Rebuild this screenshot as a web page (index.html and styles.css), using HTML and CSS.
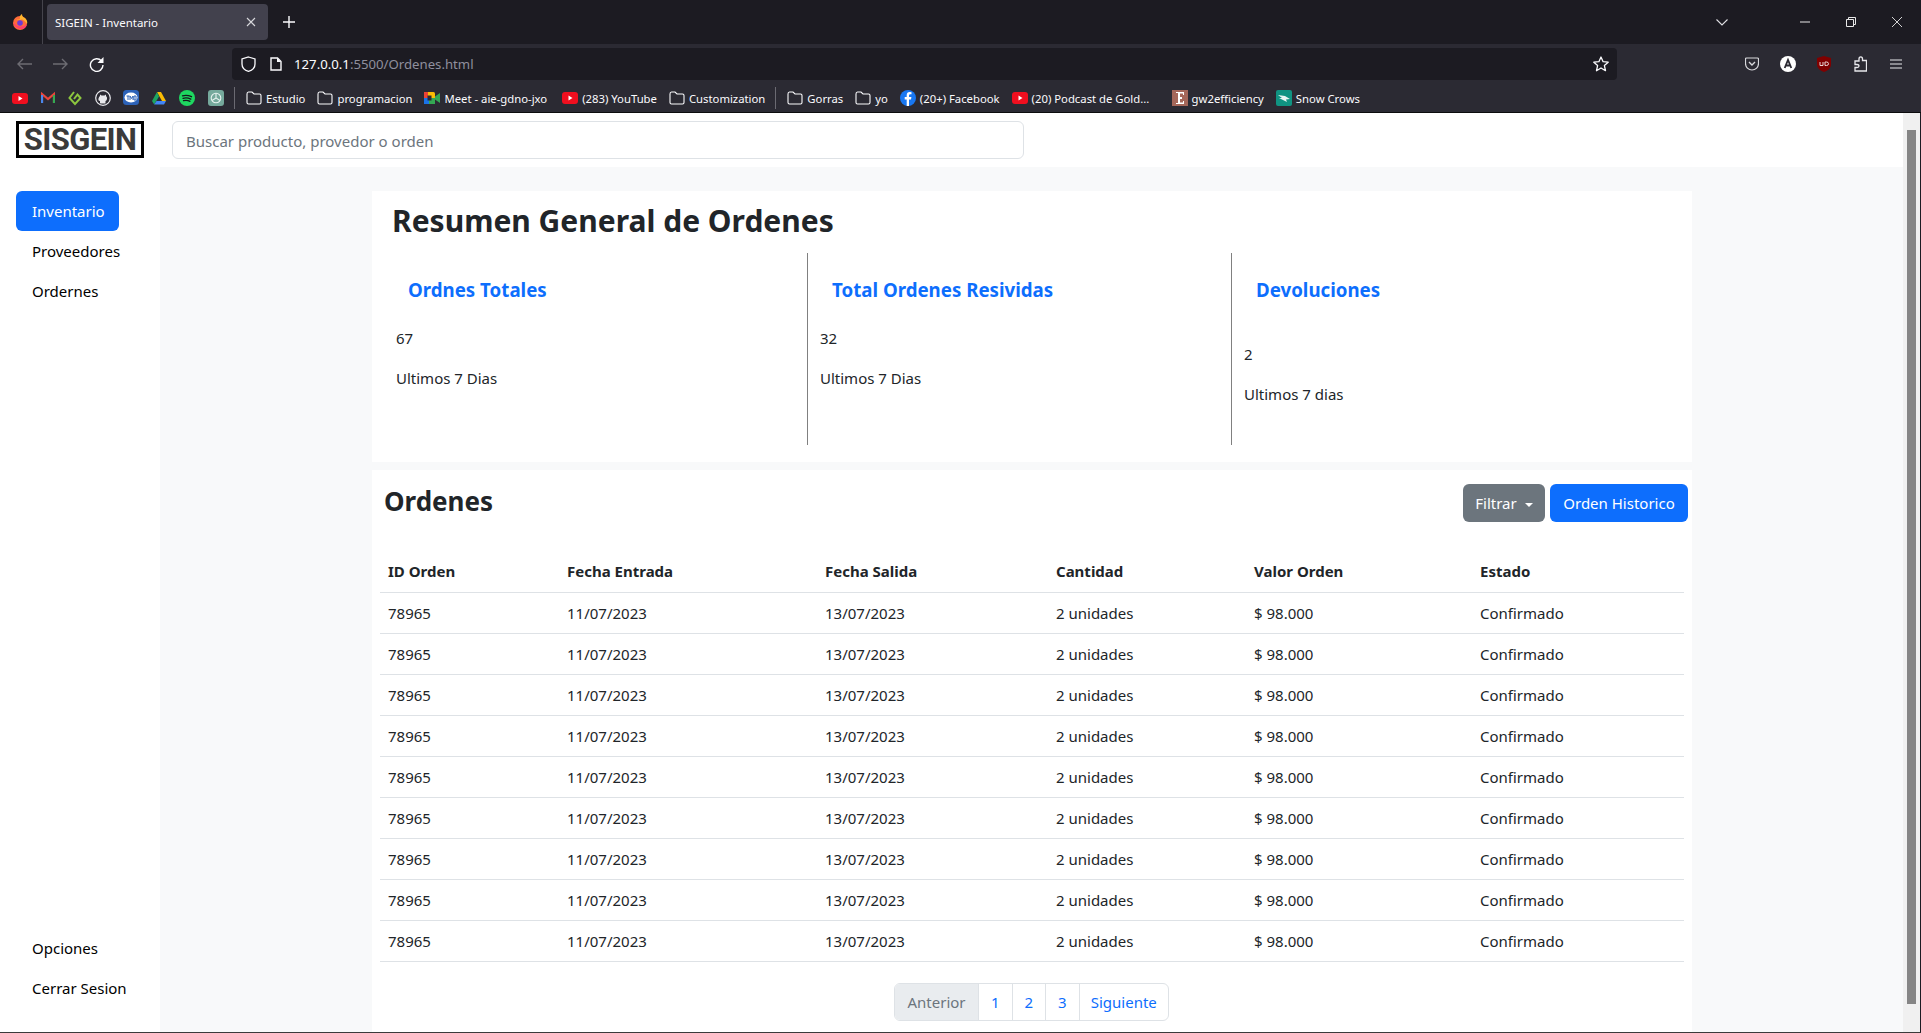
FILE: index.html
```html
<!DOCTYPE html>
<html>
<head>
	<title>SIGEIN - Inventario</title>
	<meta charset="utf-8">
	<link rel="stylesheet" href="styles.css">
</head>
<body>
	<div class="tabstrip">
		<div class="ff-box">
			<svg width="16" height="16" viewBox="0 0 16 16"><circle cx="8" cy="9" r="7" fill="#ff6a3a"/><path d="M3 4 Q6 6 8 5 Q7 2 10 0 Q10 3 13 4 Q16 7 15 10 Q11 4 8 6 Q5 6 3 4Z" fill="#ffb52e"/><circle cx="8" cy="9" r="2.800" fill="#6b3bd6"/><path d="M1 8 Q3 15 9 15 Q14 15 15 10 Q12 13 8 12.500 Q4 12 1 8Z" fill="#ff3d6e"/></svg>
		</div>
		<div class="tab">
			<span class="tab-title">SIGEIN - Inventario</span>
			<svg width="10" height="10" viewBox="0 0 10 10"><path d="M1 1 9 9M9 1 1 9" stroke="#d8d8dc" stroke-width="1.1"/></svg>
		</div>
		<svg class="newtab" width="12" height="12" viewBox="0 0 12 12"><path d="M6 0V12M0 6H12" stroke="#fbfbfe" stroke-width="1.4"/></svg>
		<div class="win-btns">
			<svg class="win-list" width="12" height="7" viewBox="0 0 12 7"><path d="M.5.5 6 6 11.500.5" fill="none" stroke="#e0e0e4" stroke-width="1.1"/></svg>
			<svg class="win-min" width="10" height="2" viewBox="0 0 10 2"><path d="M0 1H10" stroke="#e8e8e8"/></svg>
			<svg class="win-max" width="10" height="10" viewBox="0 0 10 10"><path d="M.5 2.500H7.500V9.500H.5ZM2.500 2.500V.5H9.500V7.500H7.500" fill="none" stroke="#e8e8e8"/></svg>
			<svg class="win-close" width="10" height="10" viewBox="0 0 10 10"><path d="M0 0 10 10M10 0 0 10" stroke="#e8e8e8" stroke-width=".9"/></svg>
		</div>
	</div>

	<div class="toolbar">
		<svg class="tb-back" width="15" height="12" viewBox="0 0 15 12"><path d="M15 6H1M6 1 1 6 6 11" fill="none" stroke="#6d6c73" stroke-width="1.4"/></svg>
		<svg class="tb-forward" width="15" height="12" viewBox="0 0 15 12"><path d="M0 6H14M9 1 14 6 9 11" fill="none" stroke="#6d6c73" stroke-width="1.4"/></svg>
		<svg class="tb-reload" width="15" height="15" viewBox="0 0 15 15"><path d="M12.500 4A6.300 6.300 0 1 0 14 8" fill="none" stroke="#fbfbfe" stroke-width="1.4"/><path d="M14.500 0V6H8.500Z" fill="#fbfbfe"/></svg>
		<div class="urlbar">
			<svg width="15" height="16" viewBox="0 0 15 16"><path d="M7.500 1 14 3V8C14 12 10.500 14.500 7.500 15.300 4.500 14.500 1 12 1 8V3Z" fill="none" stroke="#fbfbfe" stroke-width="1.3"/></svg>
			<svg class="url-page" width="12" height="14" viewBox="0 0 12 14"><path d="M1 1H7.500L11 4.500V13H1Z" fill="none" stroke="#fbfbfe" stroke-width="1.4"/><path d="M7 1V5H11Z" fill="#fbfbfe"/></svg>
			<span class="url-text">127.0.0.1<span class="url-dim">:5500/Ordenes.html</span></span>
			<svg class="url-star" width="16" height="16" viewBox="0 0 16 16"><path d="M8 1 10.100 5.700 15.200 6.200 11.400 9.600 12.500 14.700 8 12 3.500 14.700 4.600 9.600.8 6.200 5.900 5.700Z" fill="none" stroke="#fbfbfe" stroke-width="1.3" stroke-linejoin="round"/></svg>
		</div>
		<div class="tb-right">
			<svg width="14" height="14" viewBox="0 0 14 14"><path d="M1.500 1H12.500Q13.500 1 13.500 2V6.500A6.500 6.500 0 0 1 .5 6.500V2Q.5 1 1.500 1Z" fill="none" stroke="#d8d8dc" stroke-width="1.2"/><path d="M4 5 7 8 10 5" fill="none" stroke="#d8d8dc" stroke-width="1.4"/></svg>
			<svg width="16" height="16" viewBox="0 0 16 16"><circle cx="8" cy="8" r="8" fill="#fff"/><path d="M4.700 12 8 3.800 11.300 12M6 9.500H10" fill="none" stroke="#2b2a33" stroke-width="1.800"/></svg>
			<svg width="14" height="16" viewBox="0 0 14 16"><path d="M7 0 14 2V8.500C14 12.500 10 15 7 16 4 15 0 12.500 0 8.500V2Z" fill="#800000"/><path d="M3 6V9.500H6V6M8 6V9.500H9.500Q11.500 9.500 11.500 7.700 11.500 6 9.500 6Z" fill="none" stroke="#e9d5d5" stroke-width="1"/></svg>
			<svg width="13" height="16" viewBox="0 0 13 16"><path d="M1 5H5V3Q5 .8 6.800 .8 8.500 .8 8.500 3V4.500H12.500V15H1V11.500H3Q5 11.500 5 10 5 8.500 3 8.500H1Z" fill="none" stroke="#e8e8ec" stroke-width="1.3"/></svg>
			<svg width="12" height="10" viewBox="0 0 12 10"><path d="M0 1H12M0 5H12M0 9H12" stroke="#e8e8ec" stroke-width="1.2"/></svg>
		</div>
	</div>

	<div class="bookmarks">
		<div class="bm-icons">
			<svg width="16" height="16" viewBox="0 0 16 16"><rect y="3" width="16" height="11" rx="3" fill="#f00f1f"/><path d="M6.500 6V11L10.500 8.500Z" fill="#fff"/></svg>
			<svg width="14" height="16" viewBox="0 0 14 16"><path d="M1 13V4L7 9 13 4V13" fill="none" stroke="#e9453a" stroke-width="2.200"/><path d="M1 13V5" stroke="#4a88ee" stroke-width="2.200"/><path d="M13 13V5" stroke="#35a853" stroke-width="2.200"/></svg>
			<svg width="14" height="16" viewBox="0 0 14 16"><path d="M6 2 1.500 8 7 14 12.500 8 9.500 4.500 6 9" fill="none" stroke="#8cc63f" stroke-width="2"/></svg>
			<svg width="16" height="16" viewBox="0 0 16 16"><circle cx="8" cy="8" r="7.300" fill="none" stroke="#e8e8ec" stroke-width="1.200"/><path d="M5 13V11Q3 11 3.500 8.500 4 6.500 5 6V4.500L6.500 5.500H9.500L11 4.500V6Q12.500 7.500 12 9 11.500 11 10.500 11V13.500H5.500Z" fill="#e8e8ec"/></svg>
			<svg width="16" height="16" viewBox="0 0 16 16"><rect width="16" height="15" rx="3.500" fill="#2c62b8"/><ellipse cx="8" cy="7.500" rx="6.500" ry="5" fill="#fff"/><path d="M3.500 6H6.500M5 6V10M7 10V6L8.500 8.500 10 6V10M11 6H13V10H11Z" fill="none" stroke="#2c62b8"/></svg>
			<svg width="14" height="16" viewBox="0 0 14 16"><path d="M5 2H9L14 11H10Z" fill="#fbbc04"/><path d="M5 2 0 11 2.200 14.500 7 6.500Z" fill="#1da462"/><path d="M2.200 14.500H12L14 11H4.500Z" fill="#4285f4"/></svg>
			<svg width="16" height="16" viewBox="0 0 16 16"><circle cx="8" cy="8" r="8" fill="#1ed760"/><path d="M3.500 5.800Q8 4.500 12.500 6.700M4 8.300Q8 7.200 11.800 9.100M4.500 10.700Q8 9.800 11 11.300" fill="none" stroke="#14181c" stroke-width="1.300" stroke-linecap="round"/></svg>
			<svg width="16" height="16" viewBox="0 0 16 16"><rect width="16" height="16" rx="3" fill="#75a99c"/><circle cx="8" cy="8" r="4.800" fill="none" stroke="#e6f2ef" stroke-width="1.100"/><path d="M8 3.200V8L12 10.500M8 8 4 10.500" fill="none" stroke="#e6f2ef" stroke-width="1.100"/></svg>
		</div>
		<span class="bm-sep"></span>
		<div class="bm-item">
			<svg class="bm-folder" width="16" height="14" viewBox="0 0 16 14"><path d="M1 3Q1 1 2.500 1H6L8 3H13.500Q15 3 15 4.500V11.500Q15 13 13.500 13H2.500Q1 13 1 11.500Z" fill="none" stroke="#fbfbfe" stroke-width="1.100"/></svg>
			<span>Estudio</span>
		</div>
		<div class="bm-item">
			<svg class="bm-folder" width="16" height="14" viewBox="0 0 16 14"><path d="M1 3Q1 1 2.500 1H6L8 3H13.500Q15 3 15 4.500V11.500Q15 13 13.500 13H2.500Q1 13 1 11.500Z" fill="none" stroke="#fbfbfe" stroke-width="1.100"/></svg>
			<span>programacion</span>
		</div>
		<div class="bm-item bm-meet">
			<svg width="16" height="14" viewBox="0 0 16 14"><rect x="0" y="1" width="11" height="12" rx="1.500" fill="#fbbc04"/><rect x="0" y="7" width="5" height="6" fill="#1a73e8"/><rect x="5" y="7" width="6" height="6" fill="#34a853"/><rect x="0" y="1" width="4" height="6" fill="#ea4335"/><rect x="3.500" y="4.500" width="4" height="5" fill="#2b2a33"/><path d="M11 5.500 16 2V12L11 8.500Z" fill="#34a853"/></svg>
			<span>Meet - aie-gdno-jxo</span>
		</div>
		<div class="bm-item">
			<svg width="16" height="14" viewBox="0 0 16 14"><rect y="1" width="16" height="12" rx="3" fill="#f00f1f"/><path d="M6.500 4.500V9.500L10.500 7Z" fill="#fff"/></svg>
			<span>(283) YouTube</span>
		</div>
		<div class="bm-item">
			<svg class="bm-folder" width="16" height="14" viewBox="0 0 16 14"><path d="M1 3Q1 1 2.500 1H6L8 3H13.500Q15 3 15 4.500V11.500Q15 13 13.500 13H2.500Q1 13 1 11.500Z" fill="none" stroke="#fbfbfe" stroke-width="1.100"/></svg>
			<span>Customization</span>
		</div>
		<span class="bm-sep bm-sep-tight"></span>
		<div class="bm-item">
			<svg class="bm-folder" width="16" height="14" viewBox="0 0 16 14"><path d="M1 3Q1 1 2.500 1H6L8 3H13.500Q15 3 15 4.500V11.500Q15 13 13.500 13H2.500Q1 13 1 11.500Z" fill="none" stroke="#fbfbfe" stroke-width="1.100"/></svg>
			<span>Gorras</span>
		</div>
		<div class="bm-item">
			<svg class="bm-folder" width="16" height="14" viewBox="0 0 16 14"><path d="M1 3Q1 1 2.500 1H6L8 3H13.500Q15 3 15 4.500V11.500Q15 13 13.500 13H2.500Q1 13 1 11.500Z" fill="none" stroke="#fbfbfe" stroke-width="1.100"/></svg>
			<span>yo</span>
		</div>
		<div class="bm-item">
			<svg width="16" height="16" viewBox="0 0 16 16"><circle cx="8" cy="8" r="8" fill="#1877f2"/><path d="M9 16V9.500H11L11.400 7H9V5.500Q9 4.300 10.200 4.300H11.500V2.200Q10.500 2 9.700 2 6.700 2 6.700 5.200V7H4.700V9.500H6.700V16Z" fill="#fff"/></svg>
			<span>(20+) Facebook</span>
		</div>
		<div class="bm-item bm-long">
			<svg width="16" height="14" viewBox="0 0 16 14"><rect y="1" width="16" height="12" rx="3" fill="#f00f1f"/><path d="M6.500 4.500V9.500L10.500 7Z" fill="#fff"/></svg>
			<span>(20) Podcast de Gold...</span>
		</div>
		<div class="bm-item">
			<svg width="16" height="16" viewBox="0 0 16 16"><rect width="16" height="16" fill="#a5675a"/><path d="M4 2H12V5H11V3.500H8V7H10V9H8V12.500H11V11H12V14H4V13H6V3H4Z" fill="#fff"/></svg>
			<span>gw2efficiency</span>
		</div>
		<div class="bm-item">
			<svg width="16" height="16" viewBox="0 0 16 16"><rect width="16" height="16" rx="2" fill="#109382"/><path d="M2 5 9 6 14 9 10 9.500 11 12 7 10 3 8 6 8Z" fill="#e8f5f2"/></svg>
			<span>Snow Crows</span>
		</div>
	</div>

	<div class="viewport">
		<div class="page">
			<div class="topbar">
				<div class="logo">SISGEIN</div>
				<input class="search" type="text" placeholder="Buscar producto, provedor o orden">
			</div>
			<div class="layout">
				<div class="sidebar">
					<div class="nav">
						<a class="nav-link active">Inventario</a>
						<a class="nav-link">Proveedores</a>
						<a class="nav-link">Ordernes</a>
					</div>
					<div class="nav">
						<a class="nav-link">Opciones</a>
						<a class="nav-link">Cerrar Sesion</a>
					</div>
				</div>
				<div class="main">
					<div class="card summary">
						<h2 class="summary-title">Resumen General de Ordenes</h2>
						<div class="stats">
							<div class="stat">
								<h5 class="stat-title">Ordnes Totales</h5>
								<p>67</p>
								<p>Ultimos 7 Dias</p>
							</div>
							<div class="stat">
								<h5 class="stat-title">Total Ordenes Resividas</h5>
								<p>32</p>
								<p>Ultimos 7 Dias</p>
							</div>
							<div class="stat stat-last">
								<h5 class="stat-title">Devoluciones</h5>
								<p>2</p>
								<p>Ultimos 7 dias</p>
							</div>
						</div>
					</div>
					<div class="card orders">
						<div class="orders-head">
							<h3 class="orders-title">Ordenes</h3>
							<div class="orders-actions">
								<button class="btn btn-gray">Filtrar<span class="caret"></span></button>
								<button class="btn btn-blue">Orden Historico</button>
							</div>
						</div>
						<table class="table">
							<colgroup>
								<col class="c1"><col class="c2"><col class="c3"><col class="c4"><col class="c5"><col class="c6">
							</colgroup>
							<thead>
								<tr><th>ID Orden</th><th>Fecha Entrada</th><th>Fecha Salida</th><th>Cantidad</th><th>Valor Orden</th><th>Estado</th></tr>
							</thead>
							<tbody>
								<tr><td>78965</td><td>11/07/2023</td><td>13/07/2023</td><td>2 unidades</td><td>$ 98.000</td><td>Confirmado</td></tr>
								<tr><td>78965</td><td>11/07/2023</td><td>13/07/2023</td><td>2 unidades</td><td>$ 98.000</td><td>Confirmado</td></tr>
								<tr><td>78965</td><td>11/07/2023</td><td>13/07/2023</td><td>2 unidades</td><td>$ 98.000</td><td>Confirmado</td></tr>
								<tr><td>78965</td><td>11/07/2023</td><td>13/07/2023</td><td>2 unidades</td><td>$ 98.000</td><td>Confirmado</td></tr>
								<tr><td>78965</td><td>11/07/2023</td><td>13/07/2023</td><td>2 unidades</td><td>$ 98.000</td><td>Confirmado</td></tr>
								<tr><td>78965</td><td>11/07/2023</td><td>13/07/2023</td><td>2 unidades</td><td>$ 98.000</td><td>Confirmado</td></tr>
								<tr><td>78965</td><td>11/07/2023</td><td>13/07/2023</td><td>2 unidades</td><td>$ 98.000</td><td>Confirmado</td></tr>
								<tr><td>78965</td><td>11/07/2023</td><td>13/07/2023</td><td>2 unidades</td><td>$ 98.000</td><td>Confirmado</td></tr>
								<tr><td>78965</td><td>11/07/2023</td><td>13/07/2023</td><td>2 unidades</td><td>$ 98.000</td><td>Confirmado</td></tr>
							</tbody>
						</table>
						<ul class="pagination">
							<li class="page-item page-prev">Anterior</li>
							<li class="page-item page-num">1</li>
							<li class="page-item page-num">2</li>
							<li class="page-item page-num">3</li>
							<li class="page-item page-next">Siguiente</li>
						</ul>
					</div>
				</div>
			</div>
		</div>
		<div class="scrollbar">
			<div class="scroll-thumb"></div>
		</div>
	</div>
</body>
</html>
```

FILE: styles.css
```css
*{
	box-sizing: border-box;
}
html, body{
	height: 100%;
}
body{
	margin: 0;
	display: flex;
	flex-direction: column;
	overflow: hidden;
	font-family: "Noto Sans", "Open Sans", sans-serif;
	font-size: 15px;
	color: #212529;
	background: #fff;
}

/* navegador */
.tabstrip{
	height: 44px;
	flex: none;
	display: flex;
	align-items: center;
	background: #1c1b22;
}
.ff-box{
	width: 43px;
	height: 44px;
	padding: 14px 0 0 12px;
	border-right: 1px solid #45444c;
}
.tab{
	width: 221px;
	height: 36px;
	margin-left: 4px;
	padding: 0 12px 0 8px;
	display: flex;
	align-items: center;
	justify-content: space-between;
	background: #42414d;
	border-radius: 4px;
}
.tab-title{
	font-size: 11.500px;
	color: #fbfbfe;
}
.newtab{
	margin-left: 15px;
}
.win-btns{
	margin-left: auto;
	display: flex;
	align-items: center;
	padding-right: 19px;
}
.win-list{
	margin-right: 72px;
}
.win-max{
	margin: 0 36px;
}
.toolbar{
	height: 36px;
	flex: none;
	display: flex;
	align-items: center;
	padding: 4px 0 0 17px;
	background: #2b2a33;
}
.tb-forward{
	margin-left: 21px;
}
.tb-reload{
	margin-left: 21px;
}
.urlbar{
	width: 1385px;
	height: 32px;
	margin-left: 128px;
	padding: 0 8px 0 9px;
	display: flex;
	align-items: center;
	background: #1c1b22;
	border-radius: 4px;
}
.url-page{
	margin-left: 14px;
}
.url-text{
	margin-left: 12px;
	font-size: 13.200px;
	color: #fbfbfe;
}
.url-dim{
	color: #8f8f9d;
}
.url-star{
	margin-left: auto;
}
.tb-right{
	flex: 1;
	display: grid;
	grid-auto-flow: column;
	grid-auto-columns: 36px;
	justify-content: start;
	justify-items: center;
	align-items: center;
	padding-left: 117px;
}
.bookmarks{
	height: 33px;
	flex: none;
	display: flex;
	align-items: center;
	padding: 4px 0 0 12px;
	font-size: 11.300px;
	color: #fbfbfe;
	background: #2b2a33;
	border-bottom: 1px solid #0c0c0d;
}
.bm-icons{
	width: 212px;
	display: flex;
	align-items: center;
	justify-content: space-between;
}
.bm-sep{
	width: 1px;
	height: 22px;
	margin: 0 11px 0 10px;
	background: #6b6a72;
}
.bm-sep-tight{
	margin-left: -2px;
}
.bm-item{
	display: flex;
	align-items: center;
	gap: 4px;
	margin-right: 12px;
	white-space: nowrap;
}
.bm-meet{
	margin-right: 15px;
}
.bm-long{
	width: 148px;
}

/* pagina */
.viewport{
	flex: 1;
	min-height: 0;
	display: flex;
	border-right: 1px solid #1c1b22;
	border-bottom: 1px solid #3a3a3a;
}
.page{
	flex: 1;
	min-width: 0;
	display: flex;
	flex-direction: column;
	overflow: hidden;
}
.scrollbar{
	width: 17px;
	flex: none;
	padding: 17px 4px 28px 4px;
	background: #f0f0f0;
}
.scroll-thumb{
	height: 100%;
	background: #858585;
}
.topbar{
	height: 54px;
	flex: none;
	display: flex;
	padding: 8px 0 0 16px;
}
.logo{
	width: 128px;
	height: 37px;
	border: 3px solid #000;
	text-align: center;
	font-family: "Roboto", sans-serif;
	font-size: 31px;
	line-height: 31px;
	font-weight: 700;
	color: #3a3a3a;
	letter-spacing: -.6px;
}
.search{
	width: 852px;
	height: 38px;
	margin-left: 28px;
	padding: 7px 13px 5px 13px;
	font: inherit;
	border: 1px solid #dee2e6;
	border-radius: 6px;
}
.search::placeholder{
	color: #6c757d;
	opacity: 1;
}
.layout{
	flex: 1;
	min-height: 0;
	display: flex;
}
.sidebar{
	width: 160px;
	flex: none;
	display: flex;
	flex-direction: column;
	justify-content: space-between;
	padding: 24px 0 24px 16px;
}
.nav{
	display: flex;
	flex-direction: column;
	align-items: flex-start;
}
.nav-link{
	height: 40px;
	padding: 1px 16px 0 16px;
	line-height: 39px;
	color: #000;
	border-radius: 6px;
}
.nav-link.active{
	padding-right: 14px;
	color: #fff;
	background: #0d6efd;
}
.main{
	flex: 1;
	min-width: 0;
	padding: 24px 211px 0 212px;
	background: #f8f9fa;
	overflow: hidden;
}
.card{
	background: #fff;
}
.summary{
	height: 271px;
	margin-bottom: 8px;
	padding: 10px 12px 0 12px;
}
.summary-title{
	margin: 0 0 12px 8px;
	font-size: 30px;
	line-height: 40px;
	font-weight: 700;
}
.stats{
	display: flex;
}
.stat{
	width: 424px;
	height: 192px;
	padding: 24px 12px 0 12px;
	border-right: 1px solid #808080;
}
.stat-last{
	width: 448px;
	border-right: 0;
}
.stat-last .stat-title{
	margin-bottom: 41px;
}
.stat p{
	margin: 0 0 20px 0;
	line-height: 20px;
}
.stat-title{
	margin: 0 0 25px 12px;
	font-size: 18.700px;
	line-height: 26px;
	font-weight: 700;
	color: #0d6efd;
}
.orders{
	height: 600px;
	padding: 14px 4px 0 8px;
}
.orders-head{
	height: 67px;
	display: flex;
	justify-content: space-between;
}
.orders-title{
	margin: 0 0 0 4px;
	font-size: 26px;
	line-height: 34px;
	font-weight: 700;
}
.orders-actions{
	display: flex;
	gap: 5px;
}
.btn{
	height: 38px;
	padding: 0;
	font: inherit;
	color: #fff;
	white-space: nowrap;
	border: 0;
	border-radius: 6px;
}
.btn-gray{
	width: 82px;
	background: #6c757d;
}
.btn-blue{
	width: 138px;
	background: #0d6efd;
}
.caret{
	display: inline-block;
	margin-left: 8px;
	vertical-align: 2px;
	border-top: 4px solid #fff;
	border-left: 4px solid transparent;
	border-right: 4px solid transparent;
}
.table{
	width: 1304px;
	table-layout: fixed;
	border-collapse: collapse;
}
.c1{ width: 179px; }
.c2{ width: 258px; }
.c3{ width: 231px; }
.c4{ width: 198px; }
.c5{ width: 226px; }
.c6{ width: 212px; }
.table th, .table td{
	height: 41px;
	padding: 0 8px;
	text-align: left;
	border-bottom: 1px solid #dee2e6;
}
.table th{
	font-weight: 700;
}
.pagination{
	width: 275px;
	height: 38px;
	margin: 21px 0 0 514px;
	padding: 0;
	list-style: none;
	display: flex;
	border: 1px solid #dee2e6;
	border-radius: 6px;
	overflow: hidden;
	color: #0d6efd;
}
.page-item{
	display: flex;
	align-items: center;
	justify-content: center;
	border-right: 1px solid #dee2e6;
}
.page-prev{
	width: 84px;
	color: #6c757d;
	background: #e9ecef;
}
.page-num{
	width: 33.500px;
}
.page-next{
	flex: 1;
	border-right: 0;
}
```
